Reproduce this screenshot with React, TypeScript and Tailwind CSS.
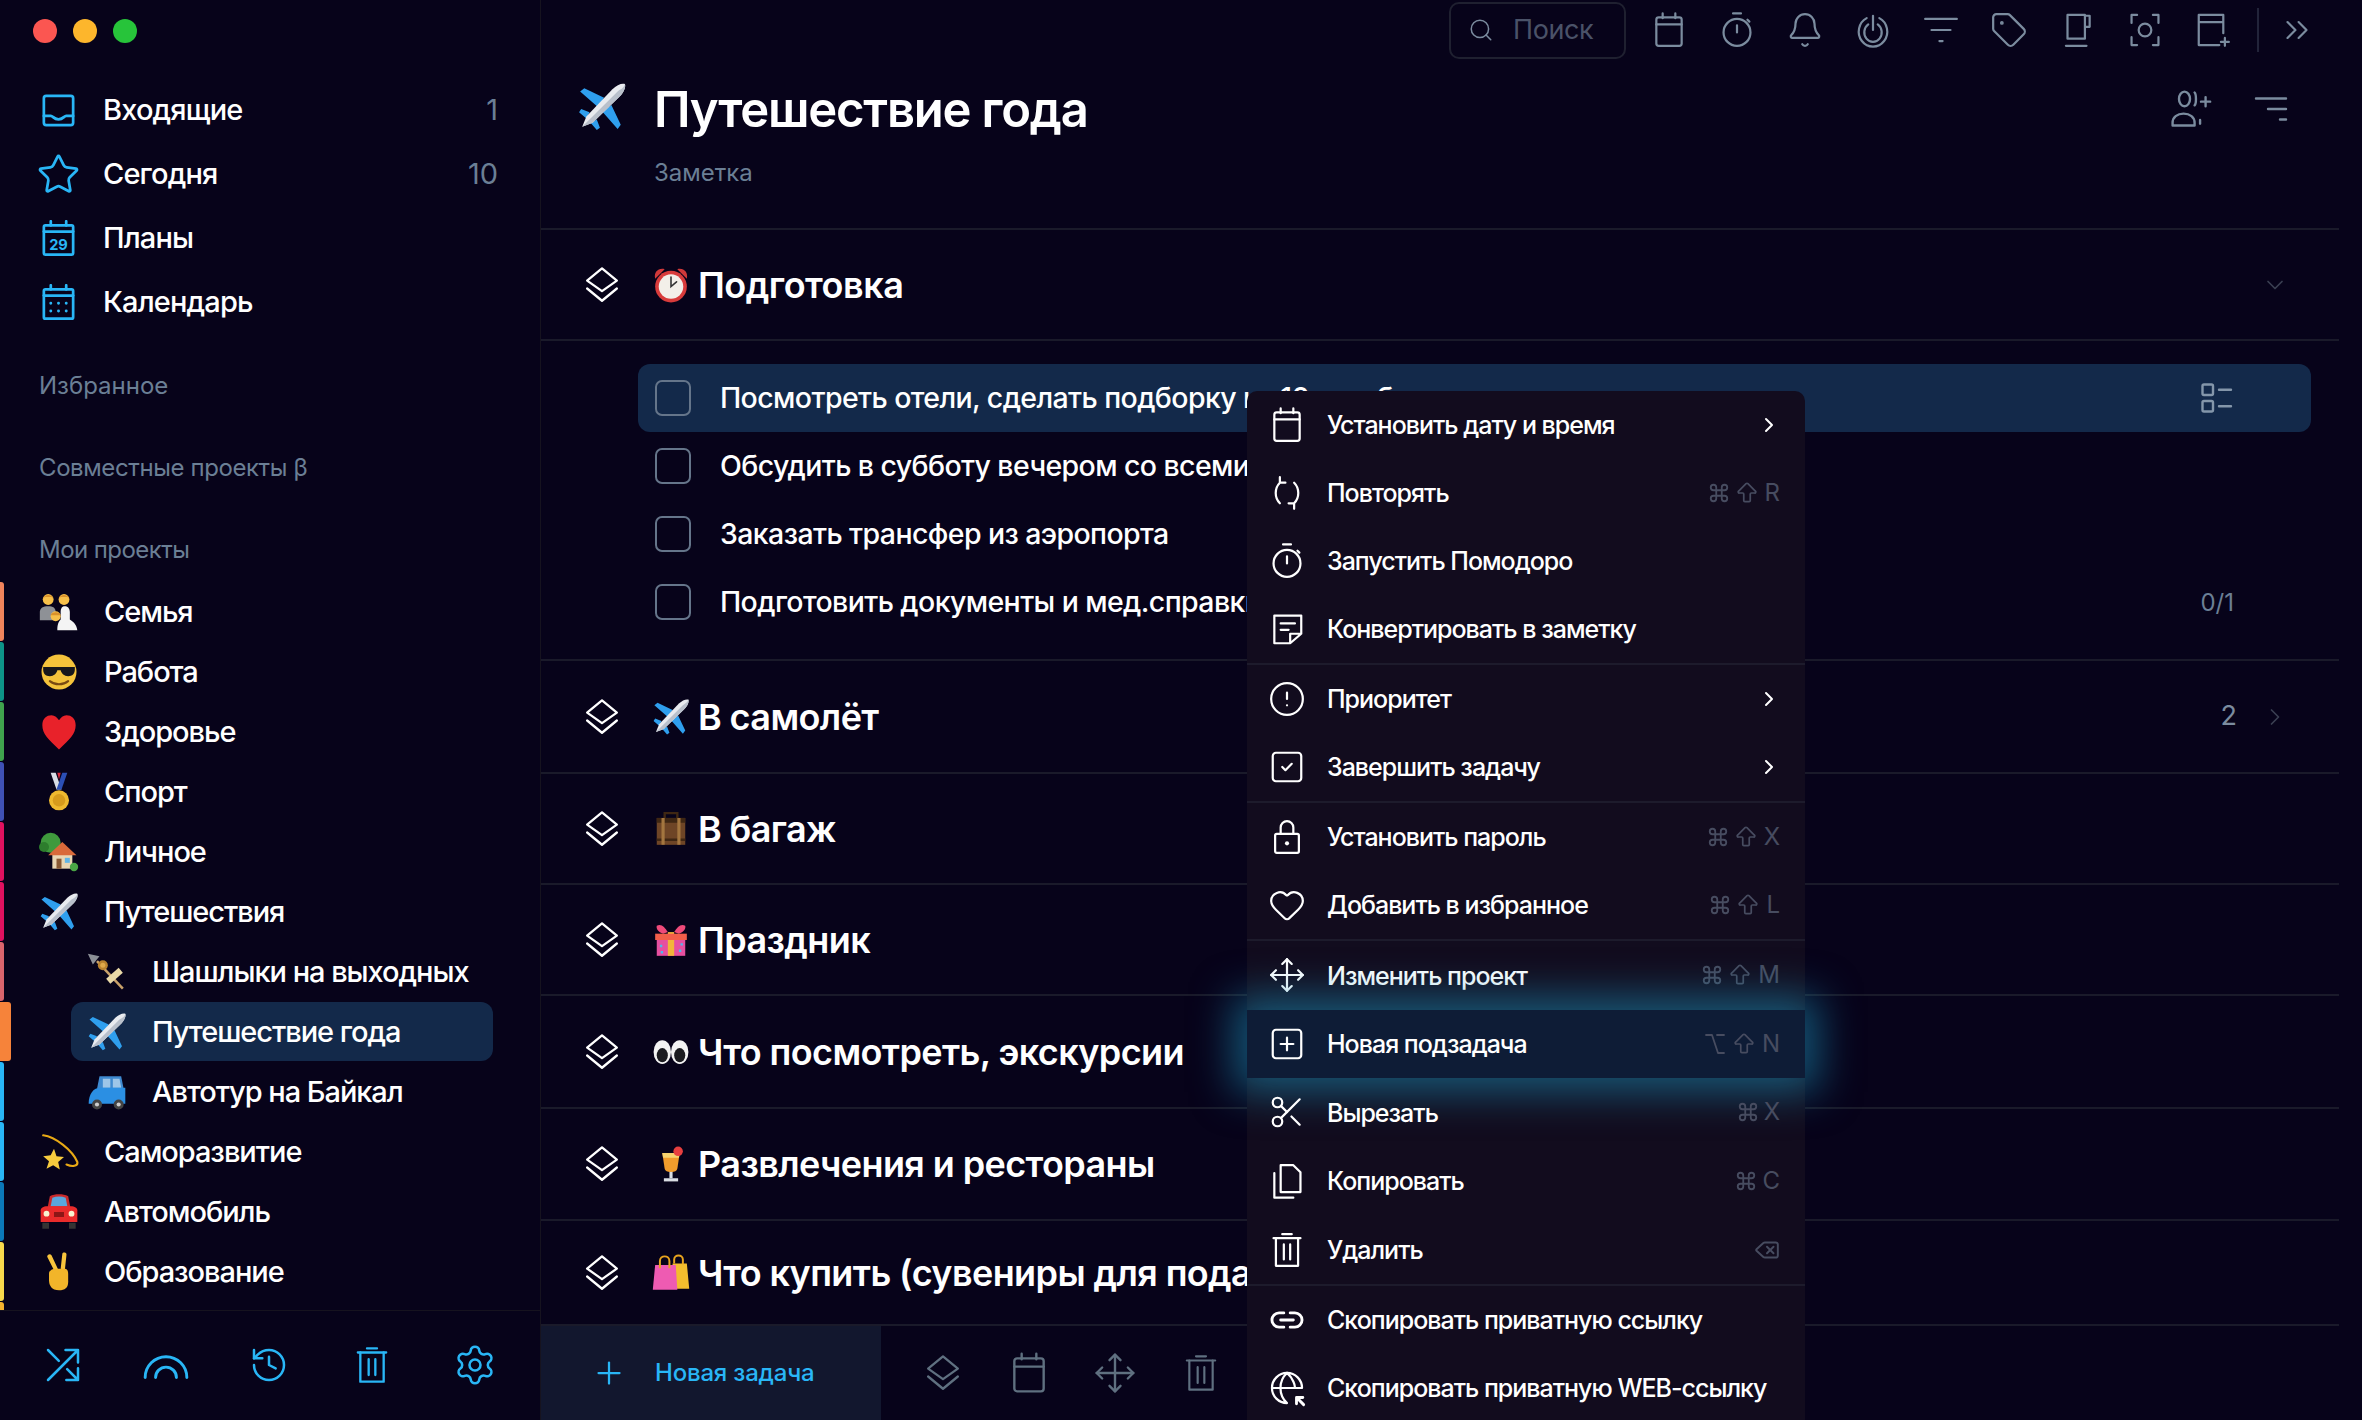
import React from "react";
import { Star, History, Settings, Heart, Move, Scissors, CircleAlert, SquareCheck, SquarePlus, Plus, ChevronRight, ChevronDown, ChevronsRight, Search, Bell, Tag, Command, ArrowBigUp, Option, Delete } from "lucide-react";

type IconProps = { className?: string; w?: number };

const Line = ({ className, w = 1.6, children }: IconProps & { children: React.ReactNode }) => (
  <svg viewBox="0 0 24 24" fill="none" stroke="currentColor" strokeWidth={w} strokeLinecap="round" strokeLinejoin="round" className={className}>
    {children}
  </svg>
);

const CalendarIcon = (p: IconProps) => (
  <Line {...p}><path d="M8 1.500v3M16 1.500v3" /><rect x="4" y="4" width="16" height="18" rx="1.500" /><path d="M4 8.500h16" /></Line>
);
const TimerIcon = (p: IconProps) => (
  <Line {...p}><path d="M9.500 1.500h5M12 9v4.500M18.600 5.500l1.200 1.200" /><circle cx="12" cy="13.500" r="8.500" /></Line>
);
const TrashIcon = (p: IconProps) => (
  <Line {...p}><path d="M3.500 4.500h17M9 2h6" /><path d="M5 4.500V22h14V4.500" /><path d="M10 8.500v9.500M14 8.500v9.500" /></Line>
);
const LayersIcon = (p: IconProps) => (
  <Line {...p}><path d="M12 2.500 20.500 9.500 12 15.500 3.500 9.500Z" /><path d="M3.500 14 12 21 20.500 14" /></Line>
);
const MoveIcon = (p: IconProps) => <Move className={p.className} strokeWidth={p.w ?? 1.4} />;

const InboxIcon = (p: IconProps) => (
  <Line {...p}><rect x="2.500" y="2.500" width="19" height="19" rx="1.500" /><path d="M2.500 15.500h4.500c1.500 0 1.800 2.200 5 2.200s3.500-2.200 5-2.200h4.500" /></Line>
);
const PlansIcon = (p: IconProps) => (
  <Line {...p}>
    <path d="M7 .8v2.700M17 .8v2.700" /><rect x="2.500" y="3.500" width="19" height="19" rx="1" /><path d="M2.500 7.500h19" />
    <text x="12" y="19.500" textAnchor="middle" fontSize="9.500" fontWeight="700" fontFamily="Inter, sans-serif" fill="currentColor" stroke="none">29</text>
  </Line>
);
const MonthIcon = (p: IconProps) => (
  <Line {...p}>
    <path d="M7 .8v2.700M17 .8v2.700" /><rect x="2.500" y="3.500" width="19" height="19" rx="1" /><path d="M2.500 7.500h19" />
    <path d="M7 12.500h.01M12 12.500h.01M17 12.500h.01M7 17.500h.01M12 17.500h.01M17 17.500h.01" strokeWidth="1.900" />
  </Line>
);
const ShuffleIcon = (p: IconProps) => (
  <Line {...p}><path d="M3 21 21 3M13.500 3H21v7.500M3 3l6.500 6.500M14.500 14.500 21 21M21 14v7h-7" /></Line>
);
const RainbowIcon = (p: IconProps) => (
  <Line {...p}><path d="M2 18a10 10 0 0 1 20 0M7 18a5 5 0 0 1 10 0" /></Line>
);
const PomoIcon = (p: IconProps) => (
  <Line {...p}><path d="M8 4.500a9 9.500 0 1 0 8 0" /><path d="M9 8.500a5.500 6 0 1 0 6 0" /><path d="M12 3v9" /></Line>
);
const FilterIcon = (p: IconProps) => (
  <Line {...p}><path d="M2 5h20M6 12h12M11 19h2" /></Line>
);
const FilterRightIcon = (p: IconProps) => (
  <Line {...p}><path d="M2 5h20M10 12h12M18 19h4" /></Line>
);
const CupIcon = (p: IconProps) => (
  <Line {...p}><path d="M6 2.500h11v15H6zM17 3h3v7h-3M5 22h13" /></Line>
);
const FocusIcon = (p: IconProps) => (
  <Line {...p}><path d="M7 2.500H3.500v5M17 2.500h3.500v5M7 21.500H3.500v-5M17 21.500h3.500v-5" /><circle cx="12" cy="12" r="4" /></Line>
);
const NotePlusIcon = (p: IconProps) => (
  <Line {...p}><path d="M16 21.500H3V2.500h15.500V14M3 7h15.500M19.500 17v5M17 19.500h5" /></Line>
);
const UserPlusIcon = (p: IconProps) => (
  <Line {...p}><ellipse cx="9" cy="6.500" rx="3" ry="4" /><path d="M2.500 21v-1.500c0-3 2.500-5 6-5s6 2 6 5V21Z" /><path d="M14.500 3c1 1 1 6 0 7M17.500 20v-2M18 8h5M20.500 5.500v5" /></Line>
);
const RepeatIcon = (p: IconProps) => (
  <Line {...p}><path d="M7.500 5.500C4 9 4 15 7.500 18.500M16.500 5.500c3.500 3.500 3.500 9.500 0 13M7.500 2v3.500H11M16.500 22v-3.500H13" /></Line>
);
const NoteIcon = (p: IconProps) => (
  <Line {...p}><path d="M14 21H4V3.500h17V15ZM14 21v-6h7M8 8.500h9M8 12.500h5" /></Line>
);
const LockIcon = (p: IconProps) => (
  <Line {...p}><rect x="4.500" y="10" width="15" height="12" rx="1" /><path d="M8 10V6a4 4 0 0 1 8 0v4" /><path d="M12 16h.01" strokeWidth="2.600" /></Line>
);
const CopyIcon = (p: IconProps) => (
  <Line {...p}><path d="M8 2h8l4.500 4.500V19H8Z" /><path d="M4 7v15.500h12" /></Line>
);
const LinkIcon = (p: IconProps) => (
  <Line {...p} w={1.800}><path d="M10 7.500H7a4.500 4.500 0 0 0 0 9h3M14 7.500h3a4.500 4.500 0 0 1 0 9h-3M8 12h8" /></Line>
);
const WebLinkIcon = (p: IconProps) => (
  <Line {...p} w={1.400}>
    <path d="M12 21.500a9.500 9.500 0 1 1 9.500-9.500M2.500 12h19M12 2.500c-5.500 5-5.500 14 0 19M12 2.500c4 3.500 5 8 5 9" />
    <path d="M19 19l3.500 3.500M18 22v-4h4" strokeWidth="1.800" />
  </Line>
);
const TaskListIcon = (p: IconProps) => (
  <Line {...p}><rect x="3" y="3" width="7" height="7" rx="1" /><rect x="3" y="14" width="7" height="7" rx="1" /><path d="M14 6.500h8M14 17.500h8" /></Line>
);

/* small colour drawings for the emoji, no emoji font on this machine */
const Plane = ({ className }: { className?: string }) => (
  <svg viewBox="0 0 48 48" className={className}>
    <path d="M26 15 7 6 3 9l17 15ZM33 22l9 19-3 4-15-17Z" fill="#2f9fee" />
    <path d="M12 29 4 26l-2 3 7 6ZM19 36l3 8-3 2-6-7Z" fill="#2f9fee" />
    <path d="M46 2c-3-1-8 1-12 5L9 33l-4 10 10-4 26-25c4-4 6-9 5-12Z" fill="#e9ebef" />
    <path d="M41 14 15 39 5 43l34-34c3-2 6-3 7-7 1 3-1 8-5 12Z" fill="#b9c0cb" />
  </svg>
);
const Family = ({ className }: { className?: string }) => (
  <svg viewBox="0 0 48 48" className={className}>
    <circle cx="11" cy="9" r="6.500" fill="#f7c04a" /><path d="M5 8c1-6 11-6 12 0l-2-2H7Z" fill="#d9912b" />
    <circle cx="30" cy="9" r="6.500" fill="#f7c04a" /><path d="M24 8c1-6 11-6 12 0l-2-2h-8Z" fill="#d9912b" />
    <path d="M1 34V24c0-5 4-7 10-7s9 2 9 7v10Z" fill="#8e9196" />
    <path d="M22 46c0-8 2-11 4-13v-9c0-5 2-7 5-7s6 2 6 7v9c3 2 8 5 9 13Z" fill="#f4f4f4" />
    <circle cx="20" cy="29" r="6" fill="#f7c04a" /><path d="M14 28c1-5 11-5 12 0h-12Z" fill="#d9912b" />
  </svg>
);
const Cool = ({ className }: { className?: string }) => (
  <svg viewBox="0 0 48 48" className={className}>
    <circle cx="24" cy="24" r="21" fill="#f5c33b" />
    <path d="M5 18h38v3c0 5-3 8-8 8s-8-3-9-7h-4c-1 4-4 7-9 7s-8-3-8-8Z" fill="#17171c" />
    <path d="M13 35c6 5 16 5 22 0" fill="none" stroke="#7a4a12" strokeWidth="2.500" strokeLinecap="round" />
  </svg>
);
const RedHeart = ({ className }: { className?: string }) => (
  <svg viewBox="0 0 48 48" className={className}>
    <path d="M24 45C11 33 4 26 4 16 4 8 9 4 15 4c4 0 7 3 9 6 2-3 5-6 9-6 6 0 11 4 11 12 0 10-7 17-20 29Z" fill="#e8222a" />
  </svg>
);
const Medal = ({ className }: { className?: string }) => (
  <svg viewBox="0 0 48 48" className={className}>
    <path d="m14 1 7 20h6L20 1Z" fill="#d8dde6" /><path d="m34 1-7 20h-6l7-20Z" fill="#2b4fb5" /><path d="m22 1 2 8 2-8Z" fill="#d8283a" />
    <circle cx="24" cy="34" r="12" fill="#eeb92f" /><circle cx="24" cy="34" r="7.500" fill="#d69b1c" />
  </svg>
);
const House = ({ className }: { className?: string }) => (
  <svg viewBox="0 0 48 48" className={className}>
    <circle cx="14" cy="13" r="12" fill="#3f9a3d" /><circle cx="6" cy="18" r="6" fill="#2d7d2d" />
    <path d="M16 44V26h24v18Z" fill="#e9d6b3" /><path d="m11 28 17-16 17 16Z" fill="#d96a3a" />
    <path d="M21 32h6v12h-6Z" fill="#8a5a34" /><path d="M31 31h6v6h-6Z" fill="#62b6e6" />
    <circle cx="42" cy="42" r="5" fill="#4aa545" />
  </svg>
);
const Kebab = ({ className }: { className?: string }) => (
  <svg viewBox="0 0 48 48" className={className}>
    <path d="M1 2 15 5 7 15Z" fill="#8b8f96" />
    <path d="m12 11 31 33" stroke="#c9a26a" strokeWidth="3" />
    <circle cx="19" cy="16" r="6" fill="#b9822f" /><circle cx="19" cy="16" r="3" fill="#e0a94a" />
    <path d="m23 32 15-13 5 6-15 13Z" fill="#e9d9a8" />
  </svg>
);
const BlueCar = ({ className }: { className?: string }) => (
  <svg viewBox="0 0 48 48" className={className}>
    <path d="M12 20 15 5h26l3 15Z" fill="#3f8ad0" /><path d="M19 8h9v11h-9ZM31 8h8l2 11H31Z" fill="#9ec6e8" />
    <path d="M2 38c0-12 6-19 14-19h30v19Z" fill="#2b8fe3" />
    <circle cx="12" cy="39" r="6" fill="#444" /><circle cx="12" cy="39" r="2.500" fill="#ccc" />
    <circle cx="38" cy="39" r="6" fill="#444" /><circle cx="38" cy="39" r="2.500" fill="#ccc" />
  </svg>
);
const Dizzy = ({ className }: { className?: string }) => (
  <svg viewBox="0 0 48 48" className={className}>
    <path d="M5 4C20 6 40 22 46 36c1 5-6 6-13 3" fill="none" stroke="#e8a915" strokeWidth="2.500" strokeLinecap="round" />
    <path d="m18 20 3 9 9 1-7 6 2 9-8-5-8 4 3-9-7-6 9-1Z" fill="#f6cb3e" />
  </svg>
);
const RedCar = ({ className }: { className?: string }) => (
  <svg viewBox="0 0 48 48" className={className}>
    <path d="M10 20 13 5c6-3 16-3 22 0l3 15Z" fill="#c92a2a" /><path d="M14 17 16 7c5-2 11-2 16 0l2 10Z" fill="#5aa7dd" />
    <path d="M2 22c0-3 3-5 8-5h28c5 0 8 2 8 5v14H2Z" fill="#e92b2b" />
    <path d="M4 37h8v7H4ZM36 37h8v7h-8Z" fill="#333" />
    <circle cx="9" cy="26" r="3.500" fill="#f8f4d0" /><circle cx="39" cy="26" r="3.500" fill="#f8f4d0" /><path d="M18 24h12v6H18Z" fill="#8d1616" />
  </svg>
);
const Victory = ({ className }: { className?: string }) => (
  <svg viewBox="0 0 48 48" className={className}>
    <path d="m26 20 2-18c.3-2 5-2 5 1l-2 19ZM18 22 10 6c-1-2 3-5 5-2l8 17Z" fill="#f7c43c" />
    <path d="M12 26c0-4 4-6 8-6h11c3 0 4 3 4 6v10c0 7-4 10-11 10-9 0-12-6-12-12Z" fill="#f2b52a" />
  </svg>
);
const AlarmClock = ({ className }: { className?: string }) => (
  <svg viewBox="0 0 48 48" className={className}>
    <path d="M4 16C2 8 8 2 16 4ZM44 16c2-8-4-14-12-12Z" fill="#d0393a" />
    <circle cx="24" cy="26" r="20" fill="#d83b3b" /><circle cx="24" cy="26" r="15.500" fill="#f3efe9" />
    <path d="M24 14v12l7-6" fill="none" stroke="#333" strokeWidth="2" strokeLinecap="round" />
  </svg>
);
const Luggage = ({ className }: { className?: string }) => (
  <svg viewBox="0 0 48 48" className={className}>
    <path d="M6 10h36v34H6Z" fill="#6e4526" /><path d="M6 10h36v6H6ZM6 36h36v3H6Z" fill="#3f2713" />
    <path d="M16 10V4h16v6" fill="none" stroke="#3f2713" strokeWidth="3" /><path d="M12 10h4v34h-4ZM32 10h4v34h-4Z" fill="#a3763f" />
  </svg>
);
const Confetti = ({ className }: { className?: string }) => (
  <svg viewBox="0 0 48 48" className={className}>
    <path d="M6 6c6-3 10 2 14 8l-6 2C8 14 5 10 6 6ZM42 6c-6-3-10 2-14 8l6 2c6-2 9-6 8-10Z" fill="#ef4a7a" />
    <path d="M6 22h36v22H6Z" fill="#e64fa0" /><path d="M20 14h8v30h-8Z" fill="#f2b53a" /><path d="M4 16h40v8H4Z" fill="#f25e4a" />
    <path d="M10 30h3v3h-3ZM34 36h3v3h-3ZM36 28h3v3h-3ZM11 38h3v3h-3Z" fill="#4fb8ec" />
  </svg>
);
const Eyes = ({ className }: { className?: string }) => (
  <svg viewBox="0 0 48 48" className={className}>
    <ellipse cx="13" cy="24" rx="11" ry="15" fill="#f3f3f3" /><ellipse cx="35" cy="24" rx="11" ry="15" fill="#f3f3f3" />
    <ellipse cx="13" cy="28" rx="7" ry="9" fill="#1b1b20" /><ellipse cx="35" cy="28" rx="7" ry="9" fill="#1b1b20" />
  </svg>
);
const Cocktail = ({ className }: { className?: string }) => (
  <svg viewBox="0 0 48 48" className={className}>
    <path d="M13 10h22l-3 20c-1 3-3 4-8 4s-7-1-8-4Z" fill="#f19c2c" /><path d="M13 10h22l-1 6H14Z" fill="#f7d36e" />
    <path d="M22 34h4v8h-4Z" fill="#d9dde3" /><path d="M15 42h18v4H15Z" fill="#d9dde3" />
    <circle cx="33" cy="8" r="6" fill="#e73f3f" />
  </svg>
);
const Bags = ({ className }: { className?: string }) => (
  <svg viewBox="0 0 48 48" className={className}>
    <path d="M26 12h18l3 32H26Z" fill="#f3bd2e" />
    <path d="M4 14h26l2 31H1Z" fill="#ee5bb2" />
    <path d="M10 18V9c0-8 12-8 12 0v9M28 12V7c0-7 11-7 11 0v6" fill="none" stroke="#e8a41e" strokeWidth="2.500" />
  </svg>
);

const nav = [
  { icon: InboxIcon, label: "Входящие", count: "1" },
  { icon: ({ className }: IconProps) => <Star className={`${className} scale-[1.2]`} strokeWidth={1.500} />, label: "Сегодня", count: "10" },
  { icon: PlansIcon, label: "Планы" },
  { icon: MonthIcon, label: "Календарь" },
];

const projects = [
  { emoji: Family, label: "Семья", color: "bg-[#f0845c]" },
  { emoji: Cool, label: "Работа", color: "bg-[#0d9488]" },
  { emoji: RedHeart, label: "Здоровье", color: "bg-[#3fa34d]" },
  { emoji: Medal, label: "Спорт", color: "bg-[#3f51b5]" },
  { emoji: House, label: "Личное", color: "bg-[#e0115f]" },
  { emoji: Plane, label: "Путешествия", color: "bg-[#e0115f]" },
  { emoji: Kebab, label: "Шашлыки на выходных", color: "bg-[#d9646c]", sub: true },
  { emoji: Plane, label: "Путешествие года", color: "bg-[#f6833a]", sub: true, active: true },
  { emoji: BlueCar, label: "Автотур на Байкал", color: "bg-[#29b6f6]", sub: true },
  { emoji: Dizzy, label: "Саморазвитие", color: "bg-[#29b6f6]" },
  { emoji: RedCar, label: "Автомобиль", color: "bg-[#0b78b8]" },
  { emoji: Victory, label: "Образование", color: "bg-[#f7d94c]" },
];

const sections = [
  { emoji: Plane, title: "В самолёт", h: "h-[113px]", count: "2" },
  { emoji: Luggage, title: "В багаж", h: "h-[111px]" },
  { emoji: Confetti, title: "Праздник", h: "h-[111px]" },
  { emoji: Eyes, title: "Что посмотреть, экскурсии", h: "h-[113px]" },
  { emoji: Cocktail, title: "Развлечения и рестораны", h: "h-[112px]" },
  { emoji: Bags, title: "Что купить (сувениры для подарков)", h: "h-[103px]", last: true },
];

const tasks = [
  { text: "Посмотреть отели, сделать подборку из 10 и выбрать", active: true },
  { text: "Обсудить в субботу вечером со всеми за ужином" },
  { text: "Заказать трансфер из аэропорта" },
  { text: "Подготовить документы и мед.справки для поездки", meta: "0/1" },
];

const toolbarIcons = [CalendarIcon, TimerIcon, ({ className }: IconProps) => <Bell className={className} strokeWidth={1.400} />, PomoIcon, FilterIcon, ({ className }: IconProps) => <Tag className={className} strokeWidth={1.400} />, CupIcon, FocusIcon, NotePlusIcon];

type MenuItem = { icon: React.ComponentType<IconProps>; label: string; keys?: string; arrow?: boolean; active?: boolean };

const lu = (C: React.ComponentType<{ className?: string; strokeWidth?: number }>) => ({ className }: IconProps) => <C className={className} strokeWidth={1.400} />;

const menu: { tall?: boolean; items: MenuItem[] }[] = [
  {
    items: [
      { icon: CalendarIcon, label: "Установить дату и время", arrow: true },
      { icon: RepeatIcon, label: "Повторять", keys: "cmd shift R" },
      { icon: TimerIcon, label: "Запустить Помодоро" },
      { icon: NoteIcon, label: "Конвертировать в заметку" },
    ],
  },
  {
    items: [
      { icon: lu(CircleAlert), label: "Приоритет", arrow: true },
      { icon: lu(SquareCheck), label: "Завершить задачу", arrow: true },
    ],
  },
  {
    items: [
      { icon: LockIcon, label: "Установить пароль", keys: "cmd shift X" },
      { icon: lu(Heart), label: "Добавить в избранное", keys: "cmd shift L" },
    ],
  },
  {
    tall: true,
    items: [
      { icon: MoveIcon, label: "Изменить проект", keys: "cmd shift M" },
      { icon: lu(SquarePlus), label: "Новая подзадача", keys: "opt shift N", active: true },
      { icon: lu(Scissors), label: "Вырезать", keys: "cmd X" },
      { icon: CopyIcon, label: "Копировать", keys: "cmd C" },
      { icon: TrashIcon, label: "Удалить", keys: "del" },
    ],
  },
  {
    items: [
      { icon: LinkIcon, label: "Скопировать приватную ссылку" },
      { icon: WebLinkIcon, label: "Скопировать приватную WEB-ссылку" },
    ],
  },
];

function Keys({ keys }: { keys: string }) {
  return (
    <span className="flex items-center gap-[2px] text-[24px] text-[#474c60]">
      {keys.split(" ").map((k) => {
        if (k === "cmd") return <Command key={k} className="h-[22px] w-[22px]" strokeWidth={2} />;
        if (k === "shift") return <ArrowBigUp key={k} className="ml-[2px] h-[26px] w-[26px]" strokeWidth={1.600} />;
        if (k === "opt") return <Option key={k} className="h-[24px] w-[24px]" strokeWidth={1.800} />;
        if (k === "del") return <Delete key={k} className="h-[26px] w-[26px]" strokeWidth={1.800} />;
        return <span key={k} className="ml-[3px]">{k}</span>;
      })}
    </span>
  );
}

function Sidebar() {
  return (
    <aside className="flex h-full w-[541px] shrink-0 flex-col border-r border-[#16131f]">
      <div className="flex h-[78px] shrink-0 gap-[16px] pl-[33px] pt-[19px]">
        <span className="h-[24px] w-[24px] rounded-full bg-[#fb5651]" />
        <span className="h-[24px] w-[24px] rounded-full bg-[#fdb62c]" />
        <span className="h-[24px] w-[24px] rounded-full bg-[#27c43a]" />
      </div>
      <div className="flex flex-col">
        {nav.map((n) => (
          <div key={n.label} className="flex h-[64px] items-center pl-[40px] pr-[42px]">
            <n.icon className="mr-[26px] h-[37px] w-[37px] text-[#29b6f6]" w={1.750} />
            <span className="flex-1 text-[29px] font-[450] tracking-[-0.85px] text-white">{n.label}</span>
            {n.count && <span className="text-[29px] text-[#6b7f95]">{n.count}</span>}
          </div>
        ))}
      </div>
      <div className="mt-[32px] flex h-[40px] items-center pl-[39px] text-[24px] text-[#6b7f95]">Избранное</div>
      <div className="mt-[42px] flex h-[40px] items-center pl-[39px] text-[24px] tracking-[-0.4px] text-[#6b7f95]">Совместные проекты β</div>
      <div className="mt-[42px] flex h-[40px] items-center pl-[39px] text-[24px] tracking-[-0.55px] text-[#6b7f95]">Мои проекты</div>
      <div className="mt-[12px] flex flex-1 flex-col gap-[1px] overflow-hidden">
        {projects.map((p) => (
          <div key={p.label + p.sub} className="flex h-[59px] shrink-0 items-center">
            <span className={`h-full shrink-0 rounded-r-[3px] ${p.color} ${p.active ? "w-[11px]" : "w-[3.500px]"}`} />
            <div className={`flex h-full flex-1 items-center ${p.active ? "ml-[60px] mr-[47px] rounded-[12px] bg-[#13294a] pl-[16px]" : p.sub ? "ml-[83.500px]" : "ml-[35.500px]"}`}>
              <p.emoji className="mr-[22px] h-[40px] w-[40px] shrink-0" />
              <span className="ml-[3px] text-[29px] font-[450] tracking-[-1.05px] text-white">{p.label}</span>
            </div>
          </div>
        ))}
        <span className="h-[59px] w-[3.500px] shrink-0 rounded-r-[3px] bg-[#f5b32e]" />
      </div>
      <div className="flex h-[110px] shrink-0 items-center border-t border-[#16131f] pb-[2px] pl-[11.500px] text-[#29b6f6]">
        <span className="flex w-[103px] justify-center"><ShuffleIcon className="h-[40px] w-[40px]" w={1.500} /></span>
        <span className="flex w-[103px] justify-center"><RainbowIcon className="h-[50px] w-[50px]" w={1.400} /></span>
        <span className="flex w-[103px] justify-center"><History className="h-[40px] w-[40px]" strokeWidth={1.500} /></span>
        <span className="flex w-[103px] justify-center"><TrashIcon className="h-[40px] w-[40px]" w={1.400} /></span>
        <span className="flex w-[103px] justify-center"><Settings className="h-[44px] w-[44px]" strokeWidth={1.400} /></span>
      </div>
    </aside>
  );
}

function Main() {
  return (
    <main className="flex h-full min-w-0 flex-1 flex-col">
      <div className="flex h-[60px] shrink-0 items-center pl-[908px] text-[#7b8c9f]">
        <div className="flex h-[57px] w-[177px] items-center rounded-[10px] border-2 border-[#1f2030] pl-[17px]">
          <Search className="mr-[19px] h-[26px] w-[26px]" strokeWidth={1.400} />
          <span className="text-[27px] tracking-[-0.4px] text-[#4a5268]">Поиск</span>
        </div>
        <div className="ml-[24px] flex items-center gap-[30px]">
          {toolbarIcons.map((I, i) => <I key={i} className="h-[38px] w-[38px]" w={1.400} />)}
        </div>
        <span className="ml-[25px] h-[44px] w-[2px] bg-[#22243a]" />
        <ChevronsRight className="ml-[19px] h-[38px] w-[38px]" strokeWidth={1.400} />
      </div>

      <div className="mr-[23px] flex h-[170px] shrink-0 border-b-2 border-[#1a1a2a]">
        <Plane className="ml-[36px] mt-[22px] h-[50px] w-[50px] shrink-0" />
        <div className="ml-[27px] flex-1">
          <div className="mt-[19px] text-[49px] font-semibold leading-[62px] tracking-[-1.2px] text-white">Путешествие года</div>
          <div className="mt-[17px] text-[24px] leading-[30px] text-[#6b7f95]">Заметка</div>
        </div>
        <div className="mr-[50px] mt-[28px] flex h-[42px] items-center gap-[41px] text-[#7b8c9f]">
          <UserPlusIcon className="h-[44px] w-[44px]" w={1.300} />
          <FilterRightIcon className="h-[36px] w-[36px]" />
        </div>
      </div>

      <div className="min-h-0 flex-1 overflow-hidden">
        <div className="mr-[23px] flex h-[111px] items-center border-b-2 border-[#1a1a2a]">
          <LayersIcon className="ml-[40px] h-[42px] w-[42px] shrink-0 text-white" w={1.300} />
          <AlarmClock className="ml-[29px] h-[38px] w-[38px] shrink-0" />
          <span className="ml-[8px] flex-1 text-[36px] font-semibold tracking-[-0.5px] text-white">Подготовка</span>
          <ChevronDown className="mr-[50px] h-[28px] w-[28px] text-[#3a3f52]" strokeWidth={1.500} />
        </div>
        <div className="mr-[23px] h-[320px] border-b-2 border-[#1a1a2a] pt-[23px]">
          <div className="ml-[97px] mr-[28px] flex flex-col">
            {tasks.map((t) => (
              <div key={t.text} className={`flex h-[68px] items-center pl-[17px] pr-[77px] ${t.active ? "rounded-[12px] bg-[#13294a]" : ""}`}>
                <span className="h-[36px] w-[36px] shrink-0 rounded-[7px] border-2 border-[#65758a]" />
                <span className="ml-[29px] flex-1 truncate text-[28.500px] font-[450] tracking-[-0.6px] text-white">{t.text}</span>
                {t.active && <TaskListIcon className="h-[36px] w-[36px] shrink-0 text-[#8496aa]" />}
                {t.meta && <span className="pt-[2px] text-[24px] text-[#6b7f95]">{t.meta}</span>}
              </div>
            ))}
          </div>
        </div>
        {sections.map((s) => (
          <div key={s.title} className={`mr-[23px] flex ${s.h} items-center ${s.last ? "" : "border-b-2 border-[#1a1a2a]"}`}>
            <LayersIcon className="ml-[40px] h-[42px] w-[42px] shrink-0 text-white" w={1.300} />
            <s.emoji className="ml-[29px] h-[38px] w-[38px] shrink-0" />
            <span className="ml-[8px] flex-1 whitespace-nowrap text-[36px] font-semibold tracking-[-0.6px] text-white">{s.title}</span>
            {s.count && <span className="mr-[24px] text-[27px] text-[#7b8c9f]">{s.count}</span>}
            {s.count && <ChevronRight className="mr-[50px] h-[28px] w-[28px] text-[#3a3f52]" strokeWidth={1.500} />}
          </div>
        ))}
      </div>

      <div className="mr-[23px] flex h-[96px] shrink-0 items-center border-t-2 border-[#1a1a2a]">
        <div className="flex h-full w-[340px] items-center bg-[#12172e] pl-[50px] text-[#29b6f6]">
          <Plus className="mr-[28px] h-[36px] w-[36px]" strokeWidth={1.500} />
          <span className="text-[24px] font-medium tracking-[-0.2px]">Новая задача</span>
        </div>
        <div className="flex items-center pl-[19px] text-[#5f7080]">
          <span className="flex w-[86px] justify-center"><LayersIcon className="h-[42px] w-[42px]" w={1.300} /></span>
          <span className="flex w-[86px] justify-center"><CalendarIcon className="h-[44px] w-[44px]" w={1.300} /></span>
          <span className="flex w-[86px] justify-center"><MoveIcon className="h-[44px] w-[44px]" w={1.300} /></span>
          <span className="flex w-[86px] justify-center"><TrashIcon className="h-[40px] w-[40px]" w={1.300} /></span>
        </div>
      </div>
    </main>
  );
}

function ContextMenu() {
  return (
    <div className="absolute left-[1247px] top-[391px] h-[1029px] w-[558px] rounded-t-[10px] bg-[#120c1e]">
      {menu.map((g, gi) => (
        <div key={gi} className={gi < menu.length - 1 ? "border-b-2 border-[#1d1b2c]" : ""}>
          {g.items.map((it) => (
            <div
              key={it.label}
              className={`relative flex items-center pl-[21px] pr-[25px] ${g.tall ? "h-[68.600px]" : "h-[68px]"} ${it.active ? "bg-[#0e1c36] shadow-[0_0_40px_14px_rgba(30,150,190,0.55)]" : ""}`}
            >
              <it.icon className="h-[38px] w-[38px] shrink-0 text-white" w={1.400} />
              <span className="ml-[21px] flex-1 whitespace-nowrap pt-[2px] text-[25px] font-[450] tracking-[-1px] text-white">{it.label}</span>
              {it.keys && <Keys keys={it.keys} />}
              {it.arrow && <ChevronRight className="-mr-[1px] h-[24px] w-[24px] text-white" strokeWidth={2} />}
            </div>
          ))}
        </div>
      ))}
    </div>
  );
}

export default function App() {
  return (
    <div className="relative flex h-[1420px] w-[2362px] overflow-hidden bg-[#07031a] font-[Inter,sans-serif]">
      <Sidebar />
      <Main />
      <ContextMenu />
    </div>
  );
}
